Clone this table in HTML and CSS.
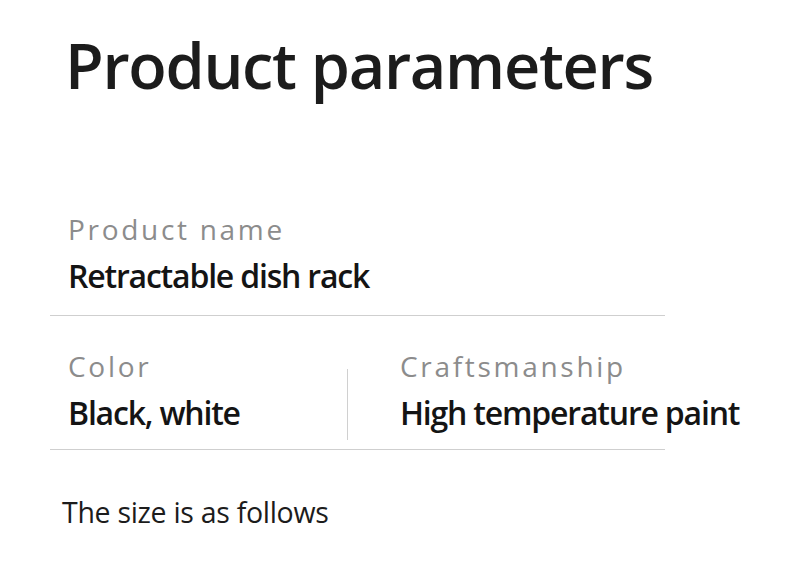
FILE: index.html
```html
<!DOCTYPE html>
<html>
<head>
<meta charset="utf-8">
<link rel="stylesheet" href="styles.css">
</head>
<body>
<div class="page">
  <h1 class="title">Product parameters</h1>
  <div class="specs">
    <div class="row">
      <div class="cell">
        <div class="label">Product name</div>
        <div class="value">Retractable dish rack</div>
      </div>
    </div>
    <div class="row row-split">
      <div class="cell">
        <div class="label">Color</div>
        <div class="value">Black, white</div>
      </div>
      <div class="vsep"></div>
      <div class="cell cell-right">
        <div class="label">Craftsmanship</div>
        <div class="value">High temperature paint</div>
      </div>
    </div>
  </div>
  <p class="note">The size is as follows</p>
</div>
</body>
</html>
```
FILE: styles.css
```css
html, body {
  margin: 0;
  padding: 0;
  background: #ffffff;
}
.page {
  width: 790px;
  height: 578px;
  overflow: hidden;
  font-family: "Open Sans", "Liberation Sans", sans-serif;
  color: #1a1a1a;
}
.title {
  margin: 0;
  padding: 25px 0 0 65px;
  font-size: 63px;
  font-weight: 600;
  line-height: 80px;
  letter-spacing: -1.3px;
  color: #1c1c1c;
}
.specs {
  margin: 106px 0 0 50px;
  width: 615px;
}
.row {
  border-bottom: 1px solid #cfcfcf;
  padding: 0 0 19px 18px;
}
.row-split {
  display: flex;
  align-items: stretch;
  padding-top: 32px;
  padding-bottom: 9px;
}
.cell {
  display: flex;
  flex-direction: column;
  flex-shrink: 0;
}
.row-split .cell {
  padding-bottom: 7px;
}
.row-split .cell:first-child {
  width: 279px;
}
.vsep {
  flex-shrink: 0;
  width: 1px;
  background: #d0d0d0;
  margin: 21px 52px 0 0;
}
.label {
  font-size: 28px;
  line-height: 36px;
  letter-spacing: 2.7px;
  color: #8c8c8c;
}
.value {
  margin-top: 9px;
  font-size: 32px;
  font-weight: 600;
  line-height: 40px;
  letter-spacing: -1.2px;
  color: #141414;
  white-space: nowrap;
}
.note {
  margin: 0;
  padding: 44px 0 0 62px;
  font-size: 28.5px;
  line-height: 36px;
  letter-spacing: -0.3px;
  color: #1c1c1c;
}
```
